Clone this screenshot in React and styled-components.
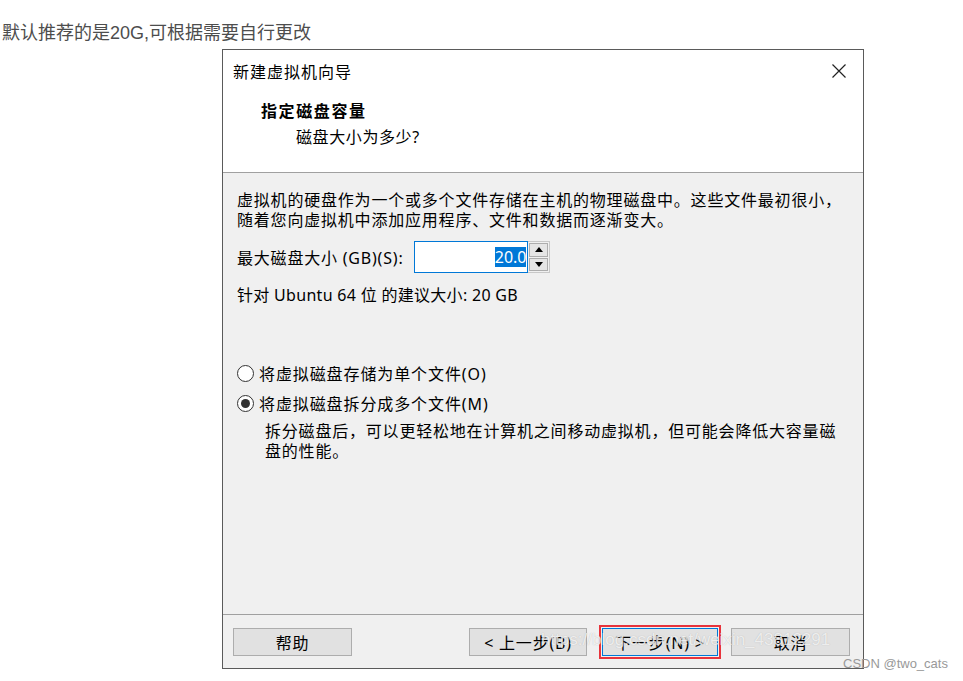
import React from 'react'
import styled, { createGlobalStyle } from 'styled-components'

const Global = createGlobalStyle`
  html, body {
    margin: 0;
    padding: 0;
    background: #fff;
  }
  body {
    font-family: "Noto Sans", "Noto Sans CJK SC", sans-serif;
  }
`

const Page = styled.div`
  position: relative;
  width: 963px;
  height: 681px;
  overflow: hidden;
`

const Caption = styled.p`
  margin: 0;
  padding: 22px 0 0 2px;
  height: 22px;
  line-height: 22px;
  font-family: "Liberation Sans", "Noto Sans CJK SC", sans-serif;
  font-size: 18px;
  color: #4d4d4d;
`

const Dialog = styled.div`
  position: relative;
  margin: 5px 0 0 222px;
  width: 640px;
  height: 618px;
  border: 1px solid #5a5a5a;
  display: flex;
  flex-direction: column;
  background: #f0f0f0;
`

const Header = styled.div`
  background: #fff;
  height: 122px;
  border-bottom: 1px solid #a0a0a0;
  display: flex;
  flex-direction: column;
`

const TitleBar = styled.div`
  height: 42px;
  display: flex;
  align-items: center;
  justify-content: space-between;
  padding: 0 16px 0 10px;
  font-size: 16px;
  letter-spacing: 1px;
  color: #000;
`

const Close = styled.svg`
  width: 16px;
  height: 16px;
`

const HeadTitle = styled.div`
  margin: 8px 0 0 38px;
  font-size: 16px;
  font-weight: 700;
  letter-spacing: 1.6px;
  line-height: 22px;
  color: #000;
`

const HeadSub = styled.div`
  margin: 4px 0 0 73px;
  font-size: 16px;
  letter-spacing: 0.6px;
  line-height: 22px;
  color: #000;
`

const Body = styled.div`
  flex: 1;
  padding: 17px 0 0 14px;
  font-size: 16px;
  color: #000;
  border-bottom: 1px solid #a0a0a0;
`

const Para = styled.div`
  line-height: 20px;
  letter-spacing: ${p => p.$spacing || '0.8px'};
  margin: ${p => p.$margin || '0'};
`

const SizeRow = styled.div`
  margin-top: 11px;
  height: 32px;
  display: flex;
  align-items: center;
  letter-spacing: 0.8px;
`

const Spin = styled.div`
  margin-left: 11px;
  display: flex;
  height: 32px;
`

const SpinInput = styled.div`
  width: 111px;
  height: 30px;
  border: 1px solid #0078d7;
  background: #fff;
  display: flex;
  align-items: center;
  justify-content: flex-end;
  padding-right: 1px;
`

const Selected = styled.span`
  background: #0078d7;
  color: #fff;
  line-height: 20px;
  letter-spacing: 0;
`

const SpinButtons = styled.div`
  width: 22px;
  display: flex;
  flex-direction: column;
  border: 1px solid #c8c8c8;
  border-left: none;
  box-sizing: border-box;
  background: #f0f0f0;
`

const SpinButton = styled.div`
  flex: 1;
  display: flex;
  align-items: center;
  justify-content: center;
  background: #e5e5e5;
  border: 1px solid #adadad;
  margin: 1px 1px ${p => (p.$top ? '0' : '1px')} 1px;
`

const Arrow = styled.div`
  width: 0;
  height: 0;
  border-left: 4px solid transparent;
  border-right: 4px solid transparent;
  ${p => (p.$up ? 'border-bottom: 5px solid #000;' : 'border-top: 5px solid #000;')}
`

const Options = styled.div`
  margin-top: 58px;
  display: flex;
  flex-direction: column;
  gap: 10px;
`

const Radio = styled.label`
  display: flex;
  align-items: center;
  height: 20px;
  letter-spacing: 0.9px;
`

const Circle = styled.span`
  box-sizing: border-box;
  width: 17px;
  height: 17px;
  border: 1.5px solid #333;
  border-radius: 50%;
  margin-right: 5px;
  display: flex;
  align-items: center;
  justify-content: center;
  background: #fff;

  &::after {
    content: "";
    display: ${p => (p.$checked ? 'block' : 'none')};
    width: 9px;
    height: 9px;
    border-radius: 50%;
    background: #333;
  }
`

const Footer = styled.div`
  height: 53px;
  display: flex;
  align-items: center;
  padding: 0 13px 0 10px;
`

const Button = styled.button`
  box-sizing: border-box;
  width: ${p => p.$w || '119px'};
  height: 28px;
  margin-left: ${p => p.$ml || '0'};
  background: #e1e1e1;
  border: 1px solid ${p => (p.$default ? '#0078d7' : '#adadad')};
  outline: ${p => (p.$default ? '2.5px solid #e8333b' : 'none')};
  outline-offset: 1px;
  font-family: "Noto Sans", "Noto Sans CJK SC", sans-serif;
  font-size: 16px;
  letter-spacing: 0.8px;
  color: #000;
  padding: 0;
`

const Spacer = styled.div`
  flex: 1;
`

const Watermark = styled.div`
  position: absolute;
  left: 318px;
  top: 580px;
  font-family: "Liberation Sans", sans-serif;
  font-size: 17px;
  color: rgba(255, 255, 255, 0.75);
  text-shadow: 0 0 1px rgba(120, 120, 120, 0.45);
  pointer-events: none;
  white-space: nowrap;
`

const Credit = styled.div`
  position: absolute;
  left: 843px;
  top: 656px;
  font-family: "Liberation Sans", sans-serif;
  font-size: 13px;
  color: #999;
  white-space: nowrap;
`

export default function App() {
  return (
    <Page>
      <Global />
      <Caption>默认推荐的是20G,可根据需要自行更改</Caption>
      <Dialog>
        <Header>
          <TitleBar>
            <span>新建虚拟机向导</span>
            <Close viewBox="0 0 16 16">
              <path d="M1.5 1.5 L14.5 14.5 M14.5 1.5 L1.5 14.5" stroke="#222" strokeWidth="1.2" fill="none" />
            </Close>
          </TitleBar>
          <HeadTitle>指定磁盘容量</HeadTitle>
          <HeadSub>磁盘大小为多少?</HeadSub>
        </Header>
        <Body>
          <Para>
            虚拟机的硬盘作为一个或多个文件存储在主机的物理磁盘中。这些文件最初很小，
            <br />
            随着您向虚拟机中添加应用程序、文件和数据而逐渐变大。
          </Para>
          <SizeRow>
            <span>最大磁盘大小 (GB)(S):</span>
            <Spin>
              <SpinInput>
                <Selected>20.0</Selected>
              </SpinInput>
              <SpinButtons>
                <SpinButton $top>
                  <Arrow $up />
                </SpinButton>
                <SpinButton>
                  <Arrow />
                </SpinButton>
              </SpinButtons>
            </Spin>
          </SizeRow>
          <Para $margin="12px 0 0 0" $spacing="0.3px">针对 Ubuntu 64 位 的建议大小: 20 GB</Para>
          <Options>
            <Radio>
              <Circle />
              将虚拟磁盘存储为单个文件(O)
            </Radio>
            <Radio>
              <Circle $checked />
              将虚拟磁盘拆分成多个文件(M)
            </Radio>
          </Options>
          <Para $margin="8px 0 0 28px">
            拆分磁盘后，可以更轻松地在计算机之间移动虚拟机，但可能会降低大容量磁
            <br />
            盘的性能。
          </Para>
        </Body>
        <Footer>
          <Button>帮助</Button>
          <Spacer />
          <Button $w="118px">&lt; 上一步(B)</Button>
          <Button $w="116px" $ml="15px" $default>下一步(N) &gt;</Button>
          <Button $ml="13px">取消</Button>
        </Footer>
        <Watermark>https://blog.csdn.net/weixin_43812291</Watermark>
      </Dialog>
      <Credit>CSDN @two_cats</Credit>
    </Page>
  )
}
